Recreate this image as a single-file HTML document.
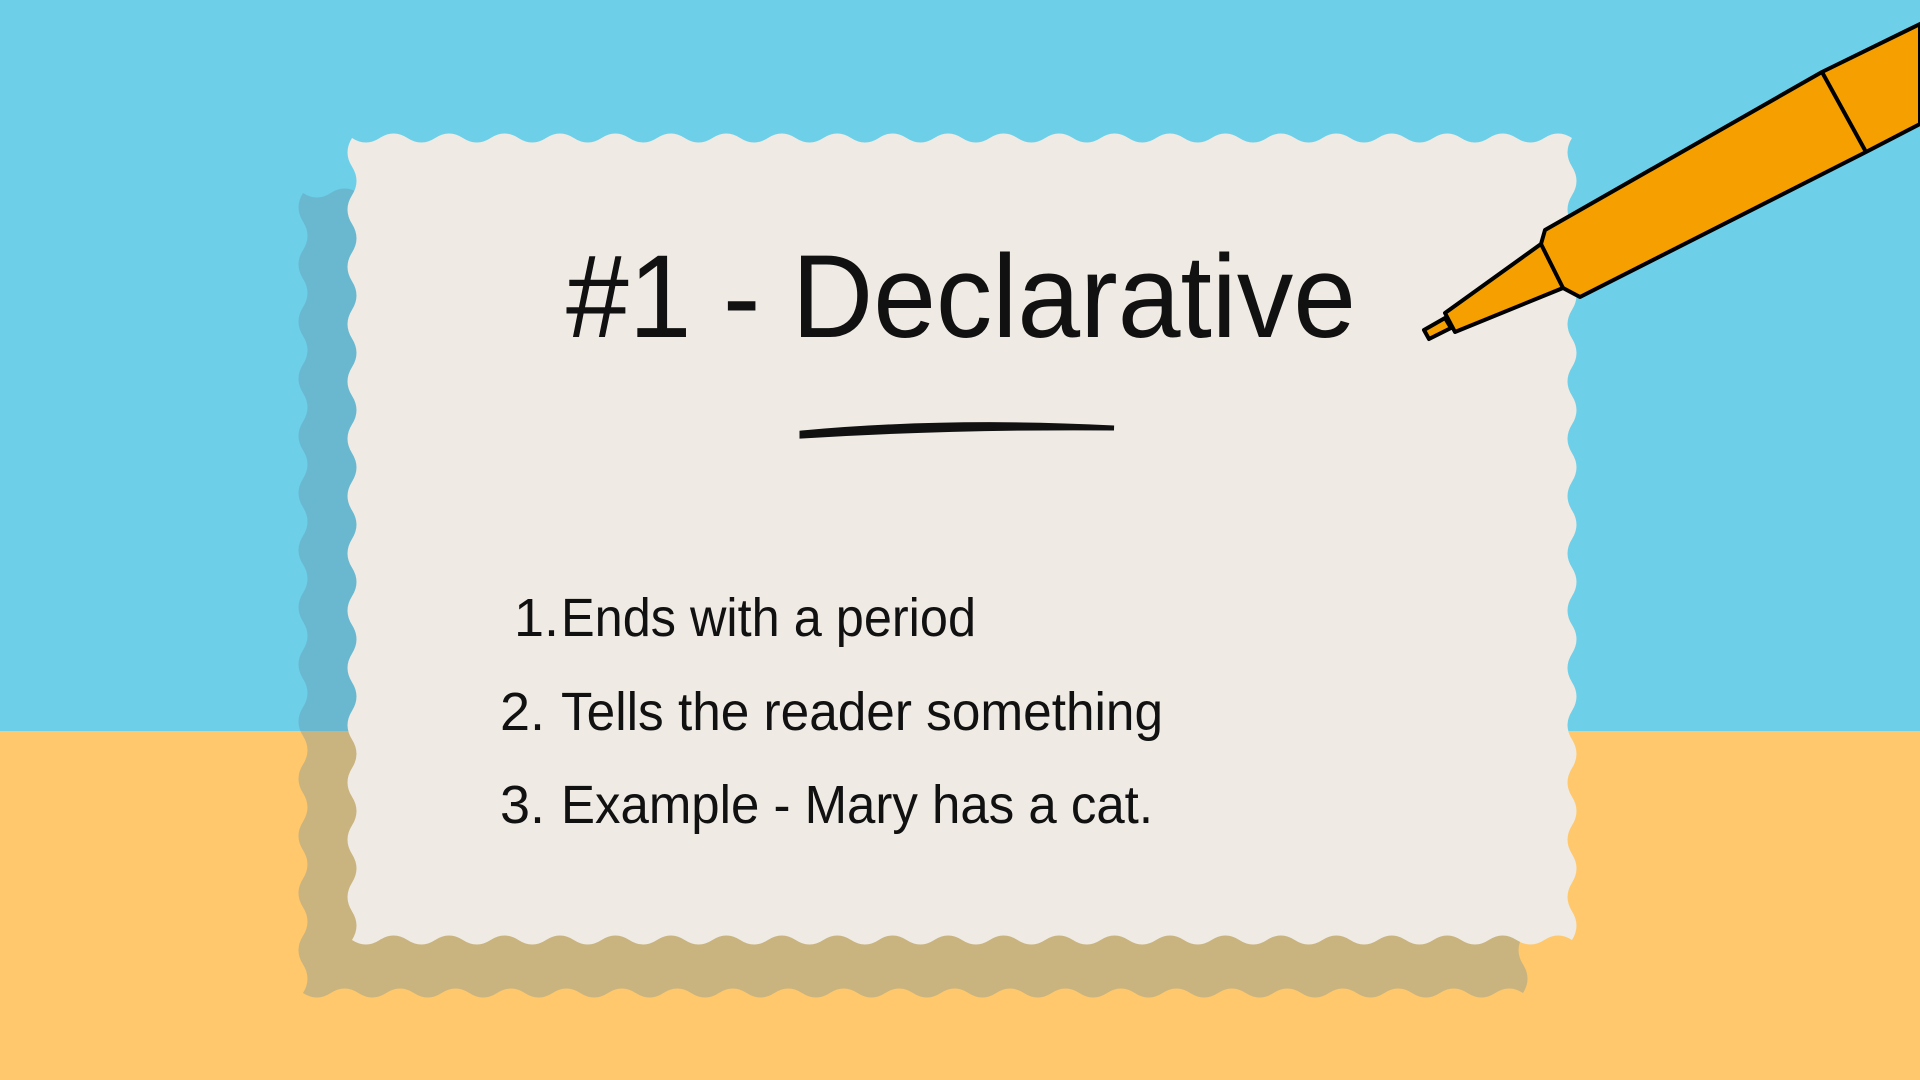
<!DOCTYPE html>
<html><head><meta charset="utf-8"><style>
html,body{margin:0;padding:0;width:1920px;height:1080px;overflow:hidden}
body{background:linear-gradient(#6dcfe8 0,#6dcfe8 731px,#ffc86c 731px)}
svg{position:absolute;left:0;top:0}
</style></head><body>
<svg width="1920" height="1080" viewBox="0 0 1920 1080">
<path id="shadow" fill="rgb(100,140,160)" fill-opacity="0.35"/>
<path id="paper" fill="#efebe4"/>
<text x="961" y="337" font-family="Liberation Sans Narrow, Liberation Sans, sans-serif" font-size="118" text-anchor="middle" textLength="790" lengthAdjust="spacingAndGlyphs" fill="#111">#1 - Declarative</text>
<path d="M802 433 C900 424 1000 422 1114 428 C1000 427 900 430 802 436 Z" fill="#111" stroke="#111" stroke-width="5" stroke-linecap="round"/>
<g font-family="Liberation Sans, sans-serif" font-size="54" fill="#111">
<text x="514" y="636">1.</text><text x="561" y="636" textLength="415" lengthAdjust="spacingAndGlyphs">Ends with a period</text>
<text x="500" y="730">2.</text><text x="561" y="730" textLength="602" lengthAdjust="spacingAndGlyphs">Tells the reader something</text>
<text x="500" y="823">3.</text><text x="561" y="823" textLength="592" lengthAdjust="spacingAndGlyphs">Example - Mary has a cat.</text>
</g>
<g stroke="#000" stroke-width="4" stroke-linejoin="round" fill="#f5a000">
<path d="M1545 230 L1822 72 L1920 24 L1920 124 L1866 152 L1580 297 L1563 288 L1455 332 L1445 313 L1541 244 Z"/>
<path d="M1822 72 L1866 152 M1541 244 L1563 288" fill="none"/>
<path d="M1424 330 L1445 318 L1451 328 L1429 339 Z"/>
</g>
</svg>
<script>
function wavy(x0,y0,x1,y1,p,a){
 let d='M'+x0+' '+y0;
 const seg=(ax,ay,bx,by)=>{
  const L=Math.hypot(bx-ax,by-ay),n=Math.round(L/p),dx=(bx-ax)/n,dy=(by-ay)/n;
  const nx=-dy/ (L/n), ny=dx/(L/n);
  for(let i=0;i<n;i++){
   const sx=ax+dx*i,sy=ay+dy*i;
   d+=' Q'+(sx+dx*0.25+nx*a)+' '+(sy+dy*0.25+ny*a)+' '+(sx+dx*0.5)+' '+(sy+dy*0.5);
   d+=' Q'+(sx+dx*0.75-nx*a)+' '+(sy+dy*0.75-ny*a)+' '+(sx+dx)+' '+(sy+dy);
  }
 };
 seg(x0,y0,x1,y0);seg(x1,y0,x1,y1);seg(x1,y1,x0,y1);seg(x0,y1,x0,y0);
 return d+'Z';
}
document.getElementById('paper').setAttribute('d',wavy(352,138,1572,940,56,9));
document.getElementById('shadow').setAttribute('d',wavy(303,193,1523,993,56,9));
</script>
</body></html>
